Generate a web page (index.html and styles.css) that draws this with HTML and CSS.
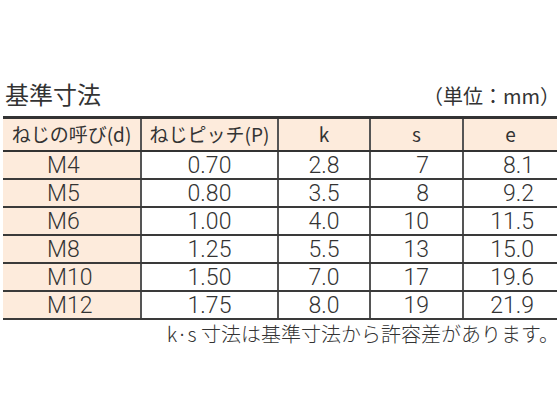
FILE: index.html
```html
<!DOCTYPE html>
<html lang="ja">

<head>
    <meta charset="UTF-8">
    <meta name="viewport" content="width=device-width, initial-scale=1.0">
    <title>基準寸法</title>
    <link rel="stylesheet" href="styles.css">
</head>

<body>
    <div class="sheet">
        <div class="head">
            <h1 class="title">基準寸法</h1>
            <div class="unit">（単位：mm）</div>
        </div>
        <table class="size-table">
            <colgroup>
                <col class="c-d">
                <col class="c-p">
                <col class="c-k">
                <col class="c-s">
                <col class="c-e">
            </colgroup>
            <thead>
                <tr>
                    <th>ねじの呼び(d)</th>
                    <th>ねじピッチ(P)</th>
                    <th>k</th>
                    <th>s</th>
                    <th>e</th>
                </tr>
            </thead>
            <tbody>
                <tr><td class="name">M4</td><td>0.70</td><td>2.8</td><td class="s">7</td><td class="e">8.1</td></tr>
                <tr><td class="name">M5</td><td>0.80</td><td>3.5</td><td class="s">8</td><td class="e">9.2</td></tr>
                <tr><td class="name">M6</td><td>1.00</td><td>4.0</td><td class="s">10</td><td class="e">11.5</td></tr>
                <tr><td class="name">M8</td><td>1.25</td><td>5.5</td><td class="s">13</td><td class="e">15.0</td></tr>
                <tr><td class="name">M10</td><td>1.50</td><td>7.0</td><td class="s">17</td><td class="e">19.6</td></tr>
                <tr><td class="name">M12</td><td>1.75</td><td>8.0</td><td class="s">19</td><td class="e">21.9</td></tr>
            </tbody>
        </table>
        <p class="note">k·s 寸法は基準寸法から許容差があります。</p>
    </div>
</body>

</html>
```

FILE: styles.css
```css
* {
    margin: 0;
    padding: 0;
    box-sizing: border-box;
}

body {
    background: #fff;
    color: #333;
    font-family: Roboto, "Liberation Sans", "Noto Sans CJK JP", sans-serif;
    font-weight: 300;
}

.sheet {
    padding: 76px 3px 0 3px;
}

.head {
    display: flex;
    justify-content: space-between;
    align-items: center;
    height: 40px;
}

.title {
    font-family: "Noto Sans CJK JP", sans-serif;
    font-size: 24px;
    font-weight: 400;
    line-height: 30px;
    padding-left: 2px;
    margin-top: -4px;
}

.unit {
    font-family: "Noto Sans CJK JP", sans-serif;
    font-size: 20px;
    font-weight: 400;
    line-height: 28px;
    margin-right: -3px;
}

.size-table {
    width: 554px;
    border-collapse: collapse;
    table-layout: fixed;
    font-size: 23px;
}

.c-d { width: 138px; }
.c-p { width: 137px; }
.c-k { width: 92px; }
.c-s { width: 93px; }
.c-e { width: 94px; }

.size-table th,
.size-table td {
    border-left: 2px solid #555;
    border-bottom: 2px solid #3a3a3a;
    text-align: center;
    line-height: 24px;
    white-space: nowrap;
    font-weight: 300;
}

.size-table th:first-child,
.size-table td:first-child {
    border-left: none;
}

.size-table thead th {
    height: 33px;
    background: #fdebdc;
    border-top: 3px solid #333;
    border-bottom: 2px solid #333;
    font-size: 19px;
    font-weight: 400;
    font-family: "Noto Sans CJK JP", sans-serif;
}

.size-table td {
    height: 28px;
    padding-top: 2px;
}

.size-table td.name {
    background: #fdebdc;
    text-align: left;
    padding-left: 44px;
}

.size-table td.s {
    text-align: right;
    padding-right: 33px;
}

.size-table td.e {
    text-align: right;
    padding-right: 23px;
}

.note {
    font-family: "Noto Sans CJK JP", sans-serif;
    font-size: 20px;
    line-height: 28px;
    text-align: right;
    margin-right: -2px;
}
```
